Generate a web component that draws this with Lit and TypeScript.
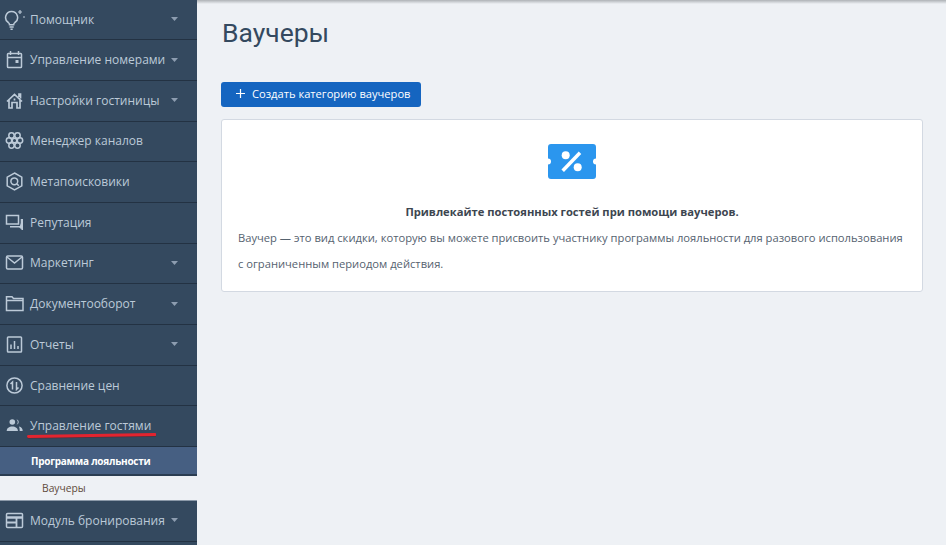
import { LitElement, css, html, svg } from 'lit';
import { customElement } from 'lit/decorators.js';

const icons: Record<string, unknown> = {
  bulb: svg`<path d="M7.5 2.5a6 6 0 0 0-3.2 11c.8.6 1.2 1.3 1.2 2.2h4.2c0-.9.4-1.6 1.200-2.2a6 6 0 0 0-3.400-11z"/><path d="M5.500 18h4.200M6.500 20.300h2.200"/><path d="M16 1v4M14 3h4M19 8h2" stroke-width="1.200"/>`,
  calendar: svg`<rect x="3.500" y="4.500" width="14" height="14" rx=".8"/><path d="M3.500 8.500h14M6.500 2v4M14.500 2v4"/><rect x="11.500" y="11" width="3" height="3" fill="currentColor" stroke="none"/>`,
  home: svg`<path d="M3 11.500 10.500 4.500l7.500 7M5 10v8h3v-5.500h5V18h3V10M15 7V4h1.500v4.500M10.500 8.500v2" stroke-width="1.700"/>`,
  flower: svg`<circle cx="10.500" cy="10.500" r="2.300"/><circle cx="7.500" cy="5.500" r="2.700"/><circle cx="13.500" cy="5.500" r="2.700"/><circle cx="5" cy="10.500" r="2.700"/><circle cx="16" cy="10.500" r="2.700"/><circle cx="7.500" cy="15.500" r="2.700"/><circle cx="13.500" cy="15.500" r="2.700"/>`,
  search: svg`<path d="M10.500 2 17.800 6.200v8.600L10.500 19l-7.300-4.200V6.200z"/><circle cx="10.300" cy="10.300" r="3.400"/><path d="m12.800 12.800 2 2"/>`,
  chat: svg`<path d="M2.500 3.500h12v8.500H2.500z"/><path d="M6 14.800h11.500V7"/><path d="M18.500 7v11l-3-3" fill="currentColor" stroke-width="1"/>`,
  mail: svg`<rect x="2.500" y="4" width="16" height="13" rx="1.200"/><path d="m3 5 7.500 6 7.500-6"/>`,
  folder: svg`<path d="M2.500 5.500V3.800h5.500l1.500 1.700h9.500v12h-16.500z"/><path d="M2.500 7.500h16.500"/>`,
  chart: svg`<rect x="3.500" y="3" width="14" height="15" rx=".8"/><path d="M7 10.500v4.500M10.500 7v8M14 12v3"/>`,
  compare: svg`<circle cx="10.500" cy="10.500" r="7.600"/><path d="M8.500 14.500V7L6.500 9M12.500 7v7.500l2-2"/>`,
  guests: svg`<g fill="currentColor" stroke="none"><circle cx="8.300" cy="7" r="2.800"/><path d="M2.700 16c0-3 2.500-4.500 5.600-4.500s5.600 1.500 5.600 4.500z"/><path d="M12.500 4.300a2.800 2.800 0 0 1 0 5.500 4 4 0 0 0 0-5.500z"/><path d="M15 11.500c2.300.4 3.700 2 3.700 4.500h-3c0-1.800-.2-3.200-.7-4.500z"/></g>`,
  layout: svg`<rect x="2.500" y="3.500" width="16" height="14" rx="1"/><path d="M2.500 7.500h16" stroke-width="2.500"/><path d="M2.500 12.500h10M12.500 8v9.500" stroke-width="1.800"/>`,
};

const items = [
  { label: 'Помощник', icon: 'bulb', arrow: true },
  { label: 'Управление номерами', icon: 'calendar', arrow: true },
  { label: 'Настройки гостиницы', icon: 'home', arrow: true },
  { label: 'Менеджер каналов', icon: 'flower' },
  { label: 'Метапоисковики', icon: 'search' },
  { label: 'Репутация', icon: 'chat' },
  { label: 'Маркетинг', icon: 'mail', arrow: true },
  { label: 'Документооборот', icon: 'folder', arrow: true },
  { label: 'Отчеты', icon: 'chart', arrow: true },
  { label: 'Сравнение цен', icon: 'compare' },
  { label: 'Управление гостями', icon: 'guests' },
];

@customElement('app-root')
export class AppRoot extends LitElement {
  static styles = css`
    :host {
      display: flex;
      width: 946px;
      height: 545px;
      overflow: hidden;
      background: #eef1f5;
      font-family: 'Open Sans', sans-serif;
    }
    .side {
      width: 197px;
      flex: none;
      background: #34495f;
      position: relative;
    }
    .item {
      box-sizing: border-box;
      height: 40.7px;
      border-bottom: 1px solid #233243;
      display: flex;
      align-items: center;
      padding: 0 0 1px 4px;
      color: #bccad8;
      font-size: 12px;
      white-space: nowrap;
    }
    .item:first-child {
      height: 40.2px;
    }
    .item svg.icon {
      width: 21px;
      height: 21px;
      flex: none;
      margin-right: 5px;
      fill: none;
      stroke: currentColor;
      stroke-width: 1.5;
    }
    .label {
      flex: 1;
    }
    .arrow {
      width: 7px;
      height: 4px;
      margin-right: 19px;
      flex: none;
      fill: #8d9db0;
    }
    .sub {
      box-sizing: border-box;
      height: 29px;
      background: #465f82;
      border-bottom: 2px solid #2b3d52;
      display: flex;
      align-items: center;
      padding-left: 31px;
      color: #fff;
      font-size: 10px;
      letter-spacing: -0.25px;
      font-weight: 700;
    }
    .leaf {
      box-sizing: border-box;
      height: 25px;
      background: #eef1f5;
      border-bottom: 1px solid #8b99a9;
      display: flex;
      align-items: center;
      padding-left: 42px;
      color: #5f4b3c;
      font-size: 10.3px;
    }
    .mark {
      position: absolute;
      left: 27px;
      top: 432px;
      width: 129px;
      height: 7px;
    }
    .main {
      flex: 1;
      min-width: 0;
      position: relative;
      padding: 14px 24px 0;
      box-sizing: border-box;
    }
    .shade {
      position: absolute;
      left: 0;
      right: 0;
      top: 0;
      height: 4px;
      background: linear-gradient(#aeb2b6, #eef1f5);
    }
    h1 {
      margin: 0 0 0 1px;
      font-family: Roboto, sans-serif;
      font-weight: 400;
      font-size: 26.5px;
      line-height: 38px;
      color: #34495f;
    }
    .btn {
      margin-top: 30px;
      width: 200px;
      height: 25px;
      box-sizing: border-box;
      border: 0;
      border-radius: 3px;
      background: #1565c0;
      color: #fff;
      font-family: inherit;
      font-size: 11.15px;
      font-weight: 400;
      display: flex;
      align-items: center;
      padding: 0 0 2px 15px;
    }
    .btn svg {
      width: 9px;
      height: 9px;
      margin-right: 7px;
      stroke: #fff;
      stroke-width: 1.2;
    }
    .card {
      margin-top: 12px;
      width: 702px;
      height: 173px;
      box-sizing: border-box;
      background: #fff;
      border: 1px solid #d3d9e2;
      border-radius: 3px;
      padding: 24px 16px 0;
      color: #55626f;
      font-size: 11.2px;
    }
    .ticket {
      display: block;
      width: 48px;
      height: 35px;
      margin: 0 auto;
    }
    .card b {
      display: block;
      text-align: center;
      margin-top: 25px;
      color: #3d4650;
      font-size: 11.2px;
      line-height: 16px;
    }
    .card p {
      margin: 5px 0 0;
      line-height: 25.5px;
      width: 670px;
    }
  `;

  render() {
    return html`
      <nav class="side">
        ${items.map(
          (i) => html`<div class="item">
            <svg class="icon" viewBox="0 0 21 21">${icons[i.icon]}</svg>
            <span class="label">${i.label}</span>
            ${i.arrow ? html`<svg class="arrow" viewBox="0 0 7 4"><path d="M0 0h7L3.5 4z" /></svg>` : ''}
          </div>`
        )}
        <div class="sub">Программа лояльности</div>
        <div class="leaf">Ваучеры</div>
        <div class="item">
          <svg class="icon" viewBox="0 0 21 21">${icons.layout}</svg>
          <span class="label">Модуль бронирования</span>
          <svg class="arrow" viewBox="0 0 7 4"><path d="M0 0h7L3.5 4z" /></svg>
        </div>
        <svg class="mark" viewBox="0 0 129 7">
          <path d="M1.500 5.300 128 3.300" stroke="#4a3340" stroke-width="3" fill="none" stroke-linecap="round" />
          <path d="M1.500 4.500 128 2.500" stroke="#e3242f" stroke-width="3" fill="none" stroke-linecap="round" />
        </svg>
      </nav>
      <main class="main">
        <div class="shade"></div>
        <h1>Ваучеры</h1>
        <button class="btn">
          <svg viewBox="0 0 9 9"><path d="M4.5 0v9M0 4.5h9" /></svg>
          Создать категорию ваучеров
        </button>
        <section class="card">
          <svg class="ticket" viewBox="0 0 48 35">
            <path
              d="M3 0h42a3 3 0 0 1 3 3v11.500a3 3 0 0 0 0 6V32a3 3 0 0 1-3 3H3a3 3 0 0 1-3-3V20.500a3 3 0 0 0 0-6V3a3 3 0 0 1 3-3z"
              fill="#2b96ee"
            />
            <circle cx="17.700" cy="11.300" r="4" fill="#fff" />
            <circle cx="29.700" cy="23.300" r="4" fill="#fff" />
            <path d="M32 8.700 14.700 26.700" stroke="#fff" stroke-width="3.500" />
          </svg>
          <b>Привлекайте постоянных гостей при помощи ваучеров.</b>
          <p>
            Ваучер — это вид скидки, которую вы можете присвоить участнику программы лояльности для разового использования с ограниченным периодом действия.
          </p>
        </section>
      </main>
    `;
  }
}
